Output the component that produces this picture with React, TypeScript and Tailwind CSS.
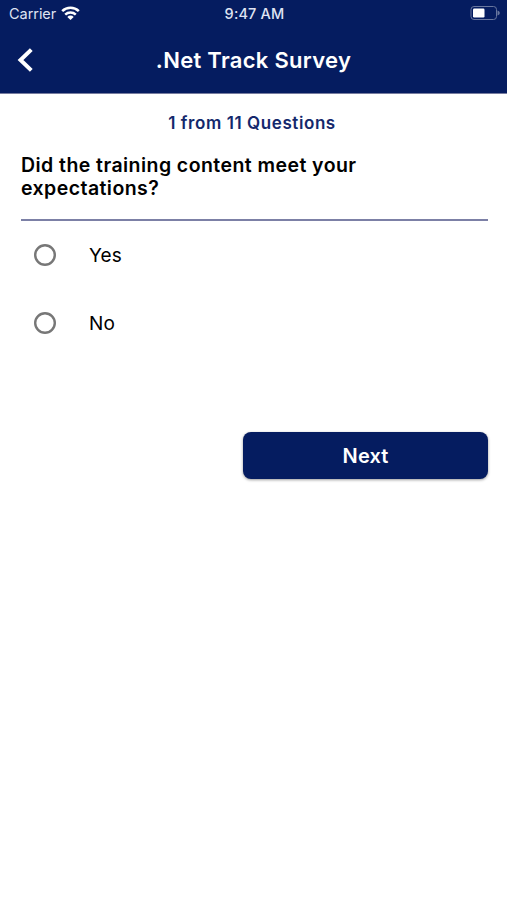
import { useState } from "react";

const OPTIONS = ["Yes", "No"];

export default function App() {
  const [answer, setAnswer] = useState<string | null>(null);

  return (
    <div className="min-h-screen w-full bg-white font-['Inter',sans-serif] text-black">
      <header className="h-[94px] border-b border-[#777c9f] bg-[#051c60] text-white">
        <StatusBar />
        <div className="grid h-[63px] grid-cols-[56px_1fr_56px] items-center">
          <button aria-label="Back" className="pl-[17px]">
            <svg width="18" height="26" viewBox="0 0 18 26" fill="none">
              <path
                d="M14.3 2.6 3.5 13l10.8 10.4"
                stroke="currentColor"
                strokeWidth="4"
              />
            </svg>
          </button>
          <h1 className="whitespace-nowrap text-center text-[22px] leading-[28px] font-semibold tracking-[0.3px]">
            .Net Track Survey
          </h1>
        </div>
      </header>

      <main className="pr-[19px] pl-[21px]">
        <p className="pt-[18px] pr-[5px] text-center text-[17px] leading-[23px] font-semibold tracking-[0.58px] text-[#14286c]">
          1 from 11 Questions
        </p>
        <h2 className="mt-[19px] w-[400px] text-[19.5px] leading-[23px] font-semibold tracking-[0.44px]">
          Did the training content meet your expectations?
        </h2>
        <hr className="mt-[19px] border-t-2 border-[#7c80a6]" />

        <div role="radiogroup">
          {OPTIONS.map((o) => (
            <Option
              key={o}
              label={o}
              checked={answer === o}
              onSelect={() => setAnswer(o)}
            />
          ))}
        </div>

        <div className="mt-[75px] flex justify-end">
          <button className="h-[47px] w-[245px] rounded-[8px] bg-[#051c60] text-[20px] font-semibold tracking-[0.1px] text-white shadow-[0_1px_3px_rgba(0,0,0,0.4)]">
            Next
          </button>
        </div>
      </main>
    </div>
  );
}

function StatusBar() {
  return (
    <div className="grid h-[28px] grid-cols-3 items-center pr-[7px] pl-[9px] text-[#dfe3f2]">
      <div className="flex items-center gap-[5px]">
        <span className="text-[14.5px] leading-[20px] tracking-[-0.05px]">Carrier</span>
        <svg width="19" height="15" viewBox="0 0 19 15" fill="none" stroke="#fff" className="-mt-[2px]">
          <path d="M1.2 5.1a12 12 0 0 1 16.6 0" strokeWidth="2.6" />
          <path d="M4.2 8.6a7.7 7.7 0 0 1 10.6 0" strokeWidth="2.5" />
          <path d="M9.5 14 6.3 10.9a4.5 4.5 0 0 1 6.4 0z" fill="#fff" stroke="none" />
        </svg>
      </div>
      <span className="text-center text-[14.5px] leading-[20px] font-medium tracking-[0.15px]">
        9:47 AM
      </span>
      <div className="-mt-[2px] flex justify-end">
        <svg width="30" height="14" viewBox="0 0 30 14" fill="none">
          <rect x="1" y=".5" width="25.5" height="13" rx="3" stroke="#69779f" />
          <rect x="3" y="2.5" width="11.5" height="9" rx="1.2" fill="#fff" />
          <path d="M27.5 4.5c3 1 3 4 0 5z" fill="#69779f" />
        </svg>
      </div>
    </div>
  );
}

function Option({
  label,
  checked,
  onSelect,
}: {
  label: string;
  checked: boolean;
  onSelect: () => void;
}) {
  return (
    <button
      role="radio"
      aria-checked={checked}
      onClick={onSelect}
      className="flex h-[68px] w-full items-center gap-[33px] pl-[13px] text-left"
    >
      <svg width="22" height="22" viewBox="0 0 22 22" fill="none">
        <circle cx="11" cy="11" r="9.8" stroke="#777" strokeWidth="2.4" />
        {checked && <circle cx="11" cy="11" r="5.5" fill="#051c60" />}
      </svg>
      <span className="pt-[2px] text-[19px] leading-[24px] tracking-[0.1px]">{label}</span>
    </button>
  );
}
